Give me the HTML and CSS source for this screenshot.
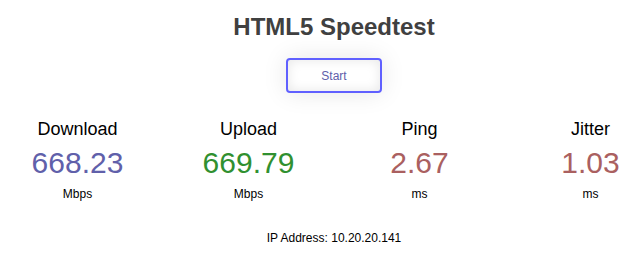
FILE: index.html
```html
<!DOCTYPE html>
<html lang="en">
<head>
    <meta charset="UTF-8">
    <meta name="viewport" content="width=device-width, initial-scale=1.0">
    <title>HTML5 Speedtest</title>
    <link rel="stylesheet" href="styles.css">
</head>
<body>

    <div class="page">
        <h1>HTML5 Speedtest</h1>
        <div class="start-btn">Start</div>

        <div class="test-row">
            <!-- Download -->
            <div class="test-area">
                <div class="test-name">Download</div>
                <div class="meter-text dl-text">668.23</div>
                <div class="unit">Mbps</div>
            </div>
            <!-- Upload -->
            <div class="test-area">
                <div class="test-name">Upload</div>
                <div class="meter-text ul-text">669.79</div>
                <div class="unit">Mbps</div>
            </div>
            <!-- Ping -->
            <div class="test-area">
                <div class="test-name">Ping</div>
                <div class="meter-text ping-text">2.67</div>
                <div class="unit">ms</div>
            </div>
            <!-- Jitter -->
            <div class="test-area">
                <div class="test-name">Jitter</div>
                <div class="meter-text ping-text">1.03</div>
                <div class="unit">ms</div>
            </div>
        </div>

        <div class="ip-area">IP Address: <span id="ip">10.20.20.141</span></div>
    </div>

</body>
</html>
```

FILE: styles.css
```css
body {
    font-family: "Liberation Sans", Arial, sans-serif;
    background-color: #fff;
    color: #000;
    margin: 0;
    padding: 13px 0 0 0;
}
.page {
    padding-left: 28px;
    text-align: center;
}
h1 {
    color: #404040;
    font-size: 24px;
    line-height: 28px;
    font-weight: bold;
    margin: 0;
}
.start-btn {
    display: flex;
    justify-content: center;
    align-items: center;
    width: 96px;
    height: 35px;
    margin: 17px auto 0 auto;
    box-sizing: border-box;
    font-size: 12px;
    color: #6060AA;
    border: 2px solid #6060FF;
    border-radius: 4px;
    box-shadow: 0 0 24px rgba(0,0,0,0.1),
        inset 0 0 12px rgba(0,0,0,0.1);
    cursor: pointer;
}
.test-row {
    display: flex;
    justify-content: center;
    gap: 73px;
    margin-top: 25px;
}
.test-area {
    flex: none;
    width: 98px;
}
.test-name {
    font-size: 18px;
    line-height: 22px;
}
.meter-text {
    font-size: 30px;
    line-height: 34px;
    margin-top: 6px;
}
.dl-text {
    color: #6060AA;
}
.ul-text {
    color: #309030;
}
.ping-text {
    color: #AA6060;
}
.unit {
    font-size: 12px;
    line-height: 14px;
    margin-top: 7px;
}
.ip-area {
    font-size: 12px;
    line-height: 14px;
    margin-top: 30px;
}
```
